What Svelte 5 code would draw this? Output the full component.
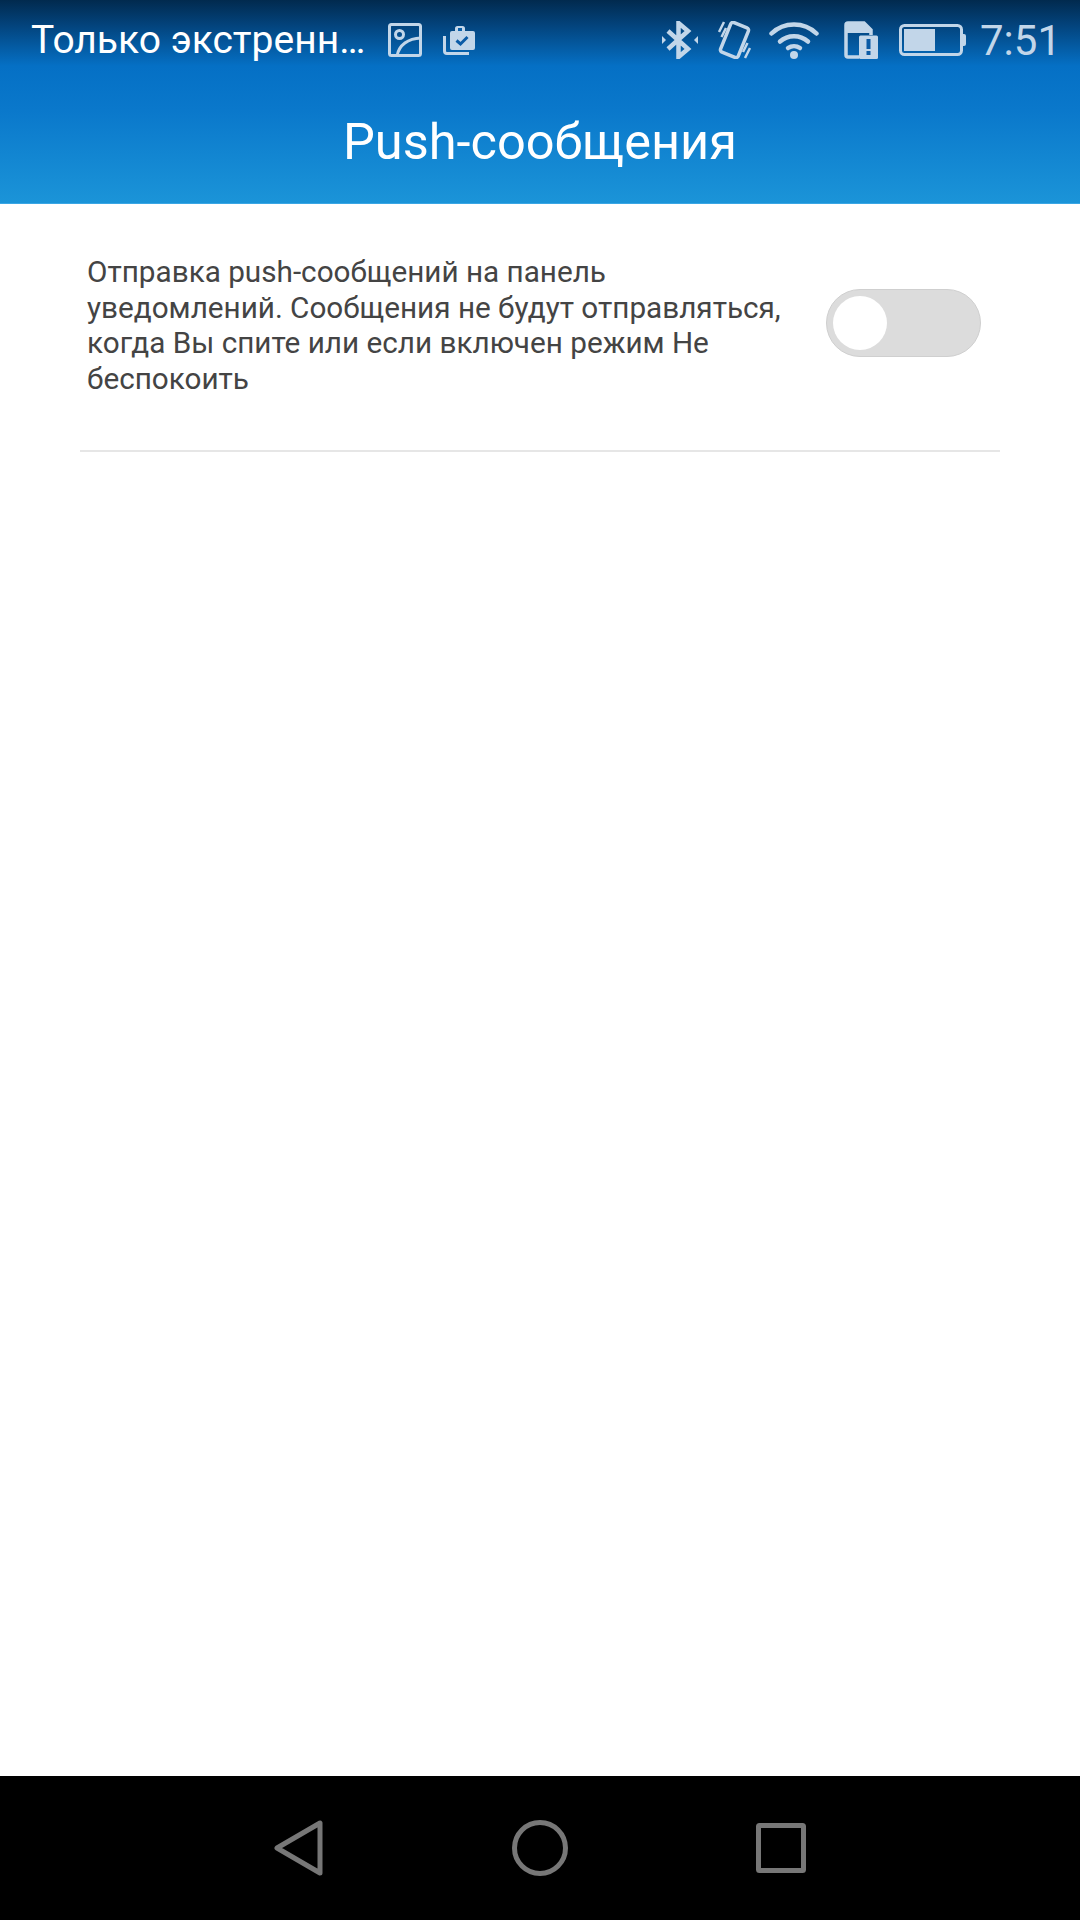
<script>
  const message = 'Отправка push-сообщений на панель уведомлений. Сообщения не будут отправляться, когда Вы спите или если включен режим Не беспокоить';
</script>

<div class="screen">
  <header class="header">
    <div class="status">
      <span class="carrier">Только экстренн…</span>
      <svg class="ic-image" width="34" height="34" viewBox="0 0 34 34" fill="none" stroke="#c2d6e9" stroke-width="3">
        <rect x="1.500" y="1.500" width="31" height="31" rx="2"/>
        <circle cx="11.500" cy="11.500" r="4"/>
        <path d="M9 33C11 22 20 15.500 33 15"/>
      </svg>
      <svg class="ic-task" width="32" height="30" viewBox="0 0 32 30">
        <path d="M7 6h5V3.500Q12 1 14.500 1h5Q22 1 22 3.500V6h8q2 0 2 2v15q0 2-2 2H9q-2 0-2-2V8q0-2 2-2z" fill="#c2d6e9"/>
        <rect x="15" y="3" width="4" height="3" fill="#0a5fa8"/>
        <path d="M13.500 15.500l4 3.500 7-7" fill="none" stroke="#0a5ba6" stroke-width="3"/>
        <path d="M1.500 11v15q0 2.500 2.500 2.500h22" fill="none" stroke="#c2d6e9" stroke-width="3"/>
      </svg>
      <span class="spacer"></span>
      <svg class="ic-bt" width="36" height="38" viewBox="0 0 36 38" fill="none" stroke="#c2d6e9" stroke-width="4.500">
        <path d="M6 10l20 18-9.500 8V2l9.500 8L6 28"/>
        <path d="M0 15v8l4-4zM36 15v8l-4-4z" fill="#c2d6e9" stroke="none"/>
      </svg>
      <svg class="ic-vib" width="33" height="38" viewBox="0 0 33 38" fill="none" stroke="#c2d6e9">
        <rect x="7" y="3" width="19" height="32" rx="2.500" transform="rotate(22 16.500 19)" stroke-width="3.500"/>
        <path d="M1 11l5-10M3.500 16L8 7M32 27l-5 10M29.500 22L25 31" stroke-width="2.500"/>
      </svg>
      <svg class="ic-wifi" width="50" height="37" viewBox="0 0 50 37" fill="none" stroke="#c2d6e9" stroke-width="4.500" stroke-linecap="round">
        <path d="M2.500 11.500C15 -0.500 35 -0.500 47.500 11.500"/>
        <path d="M11 19.500C19 12.500 31 12.500 39 19.500"/>
        <path d="M19 26C22.500 23.500 27.500 23.500 31 26" />
        <circle cx="25" cy="33" r="4" fill="#c2d6e9" stroke="none"/>
      </svg>
      <svg class="ic-sim" width="34" height="38" viewBox="0 0 34 38">
        <path d="M15 36H4q-2 0-2-2V4q0-2 2-2h16l7 7v5" fill="none" stroke="#c2d6e9" stroke-width="3.500"/>
        <path d="M2 2h18l7 7v3H2z" fill="#c2d6e9"/>
        <rect x="15" y="14.500" width="19" height="23.500" rx="1.500" fill="#c2d6e9"/>
        <rect x="22.500" y="18" width="4" height="10" fill="#0a5ba6"/>
        <rect x="22.500" y="30" width="4" height="4" fill="#0a5ba6"/>
      </svg>
      <svg class="ic-bat" width="67" height="32" viewBox="0 0 67 32">
        <rect x="1.500" y="1.500" width="61" height="29" rx="4" fill="none" stroke="#c2d6e9" stroke-width="3"/>
        <rect x="5" y="5" width="31" height="22" fill="#c2d6e9"/>
        <path d="M64 10h1q2 0 2 2v8q0 2-2 2h-1z" fill="#c2d6e9"/>
      </svg>
      <span class="clock">7:51</span>
    </div>
    <h1 class="title">Push-сообщения</h1>
  </header>

  <main class="content">
    <div class="row">
      <p class="message">{message}</p>
      <div class="toggle"><span class="knob"></span></div>
    </div>
  </main>

  <nav class="nav">
    <svg width="50" height="56" viewBox="0 0 50 56" fill="none" stroke="#777" stroke-width="5" stroke-linejoin="round">
      <path d="M3 28L46 3V53z"/>
    </svg>
    <svg width="56" height="56" viewBox="0 0 56 56" fill="none" stroke="#777" stroke-width="5">
      <circle cx="28" cy="28" r="25.500"/>
    </svg>
    <svg width="50" height="50" viewBox="0 0 50 50" fill="none" stroke="#777" stroke-width="5" stroke-linejoin="round">
      <rect x="2.500" y="2.500" width="45" height="45" rx="1"/>
    </svg>
  </nav>
</div>

<style>
  :global(body) {
    margin: 0;
    background: #fff;
  }
  .screen {
    width: 1080px;
    height: 1920px;
    display: flex;
    flex-direction: column;
    font-family: Roboto, "Noto Sans", sans-serif;
    background: #fff;
    overflow: hidden;
  }
  .header {
    height: 204px;
    box-sizing: border-box;
    border-bottom: 1px solid #3aa6e4;
    background: linear-gradient(to bottom, #012a4e 0, #03427a 24px, #0570c5 66px, #0a78cb 110px, #1b94d8 203px);
    display: flex;
    flex-direction: column;
  }
  .status {
    height: 80px;
    display: flex;
    align-items: center;
    padding-left: 31px;
    padding-right: 19px;
  }
  .carrier {
    font-size: 39px;
    color: #fff;
    white-space: nowrap;
    margin-right: 23px;
  }
  .ic-image { margin-right: 21px; }
  .spacer { flex: 1; }
  .ic-bt { margin-right: 20px; }
  .ic-vib { margin-right: 18px; }
  .ic-wifi { margin-right: 25px; }
  .ic-sim { margin-right: 21px; }
  .ic-bat { margin-right: 14px; }
  .clock {
    font-size: 42px;
    color: #c2d6e9;
  }
  .title {
    margin: 0;
    flex: 1;
    display: flex;
    align-items: center;
    justify-content: center;
    font-size: 50.500px;
    font-weight: 400;
    color: #fff;
  }
  .content {
    flex: 1;
    padding: 50px 80px 0;
  }
  .row {
    display: flex;
    align-items: center;
    gap: 35px;
    padding: 0 19px 54px 7px;
    border-bottom: 2px solid #e6e6e6;
  }
  .message {
    margin: 0;
    width: 704px;
    flex: none;
    font-size: 29.700px;
    line-height: 35.500px;
    color: #444;
  }
  .toggle {
    width: 155px;
    height: 68px;
    box-sizing: border-box;
    margin-top: -4px;
    padding: 6px;
    border: 1px solid #cfcfcf;
    border-radius: 34px;
    background: #dcdcdc;
    flex: none;
  }
  .knob {
    display: block;
    width: 54px;
    height: 54px;
    border-radius: 50%;
    background: #fff;
  }
  .nav {
    height: 144px;
    flex: none;
    background: #000;
    display: flex;
    align-items: center;
    justify-content: center;
    gap: 188px;
  }
</style>
